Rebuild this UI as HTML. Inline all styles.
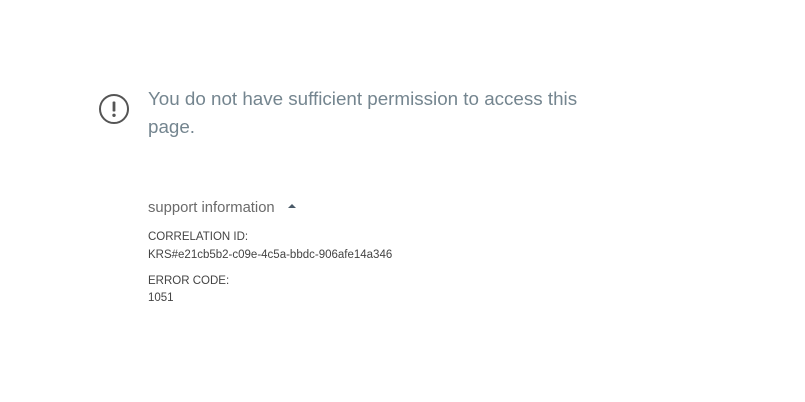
<!DOCTYPE html>
<html><head><style>
body{margin:0;width:805px;height:402px;background:#fff;font-family:"Liberation Sans",sans-serif;position:relative;overflow:hidden}
.t{position:absolute;left:148px;white-space:nowrap}
</style></head><body>
<svg style="position:absolute;left:98px;top:93px" width="32" height="32" viewBox="0 0 32 32">
<circle cx="16" cy="16" r="14" fill="none" stroke="#555" stroke-width="2"/>
<rect x="14.6" y="8.5" width="2.8" height="10" rx="0.8" fill="#555"/>
<circle cx="16" cy="22.3" r="1.7" fill="#555"/>
</svg>
<div class="t" style="top:85px;font-size:18.8px;line-height:28px;color:#74858f">You do not have sufficient permission to access this<br>page.</div>
<div class="t" style="top:200px;font-size:14.8px;color:#6a6a6a">support information <svg width="10" height="6" style="margin-left:8px;vertical-align:3px"><polygon points="1,5 5,1 9,5" fill="#4a5a68"/></svg></div>
<div class="t" style="top:231px;font-size:11.5px;color:#444">CORRELATION ID:</div>
<div class="t" style="top:249px;font-size:11.5px;color:#444">KRS#e21cb5b2-c09e-4c5a-bbdc-906afe14a346</div>
<div class="t" style="top:275px;font-size:11.5px;color:#444">ERROR CODE:</div>
<div class="t" style="top:292px;font-size:11.5px;color:#444">1051</div>
</body></html>
